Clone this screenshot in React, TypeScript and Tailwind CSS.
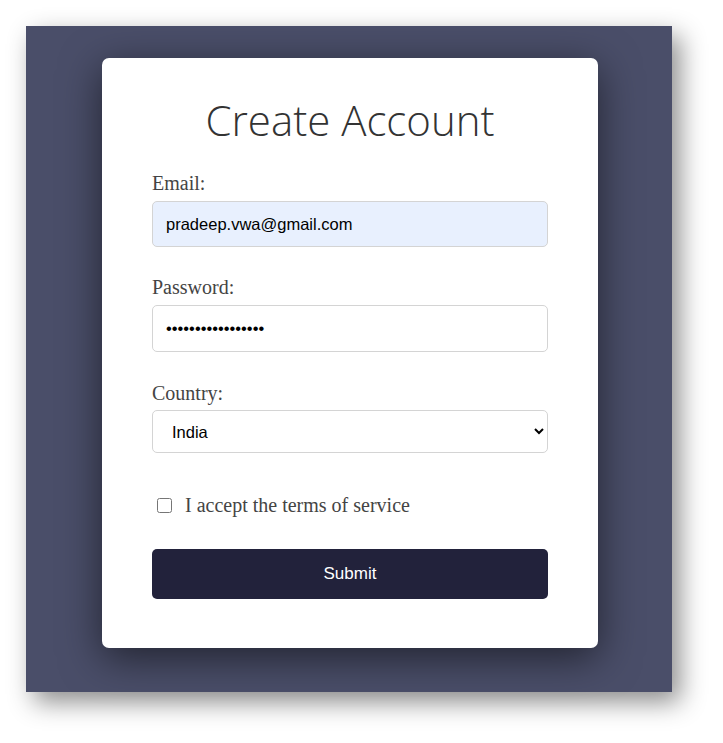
import { useState } from "react";

export default function App() {
  const [email, setEmail] = useState("pradeep.vwa@gmail.com");
  const [password, setPassword] = useState("pradeep1234567890");
  const [country, setCountry] = useState("India");
  const [accepted, setAccepted] = useState(false);

  const labelClass =
    "block text-[20px] leading-[22px] text-[#444] font-['Liberation_Serif',serif]";
  const fieldClass =
    "block w-full rounded-[5px] border border-[#d4d4d4] px-[13px] text-[16.5px] text-black font-['Liberation_Sans',Arial,sans-serif] outline-none";

  return (
    <div className="min-h-screen bg-white">
      <div className="ml-[26px] mt-[26px] flex h-[666px] w-[646px] justify-center bg-[#4a4e69] pl-[2px] pt-[32px] shadow-[8px_10px_24px_rgba(0,0,0,0.45)]">
        <form
          className="h-[590px] w-[496px] rounded-[7px] bg-white px-[50px] pt-[34px] shadow-[0_10px_40px_rgba(0,0,0,0.55)]"
          onSubmit={(e) => e.preventDefault()}
        >
          <h1 className="text-center text-[42px] font-light leading-[56px] text-[#333] font-['Open_Sans',sans-serif]">
            Create Account
          </h1>

          <div className="mt-[24px]">
            <label className={labelClass}>Email:</label>
            <input
              type="email"
              value={email}
              onChange={(e) => setEmail(e.target.value)}
              className={fieldClass + " mt-[7px] h-[46px] bg-[#e8f0fe]"}
            />
          </div>

          <div className="mt-[29px]">
            <label className={labelClass}>Password:</label>
            <input
              type="password"
              value={password}
              onChange={(e) => setPassword(e.target.value)}
              className={fieldClass + " mt-[7px] h-[47px] bg-white"}
            />
          </div>

          <div className="mt-[30px]">
            <label className={labelClass}>Country:</label>
            <select
              value={country}
              onChange={(e) => setCountry(e.target.value)}
              className={fieldClass + " mt-[6px] h-[43px] bg-white pl-[15px]"}
            >
              <option>India</option>
              <option>United States</option>
              <option>United Kingdom</option>
              <option>Canada</option>
            </select>
          </div>

          <label className="mt-[41px] flex h-[22px] items-center gap-[13px] pl-[5px] text-[20px] leading-[22px] text-[#444] font-['Liberation_Serif',serif]">
            <input
              type="checkbox"
              checked={accepted}
              onChange={(e) => setAccepted(e.target.checked)}
              className="h-[15px] w-[15px]"
            />
            I accept the terms of service
          </label>

          <button
            type="submit"
            className="mt-[33px] h-[50px] w-full rounded-[5px] bg-[#22223b] text-[17px] text-white font-['Liberation_Sans',Arial,sans-serif]"
          >
            Submit
          </button>
        </form>
      </div>
    </div>
  );
}
